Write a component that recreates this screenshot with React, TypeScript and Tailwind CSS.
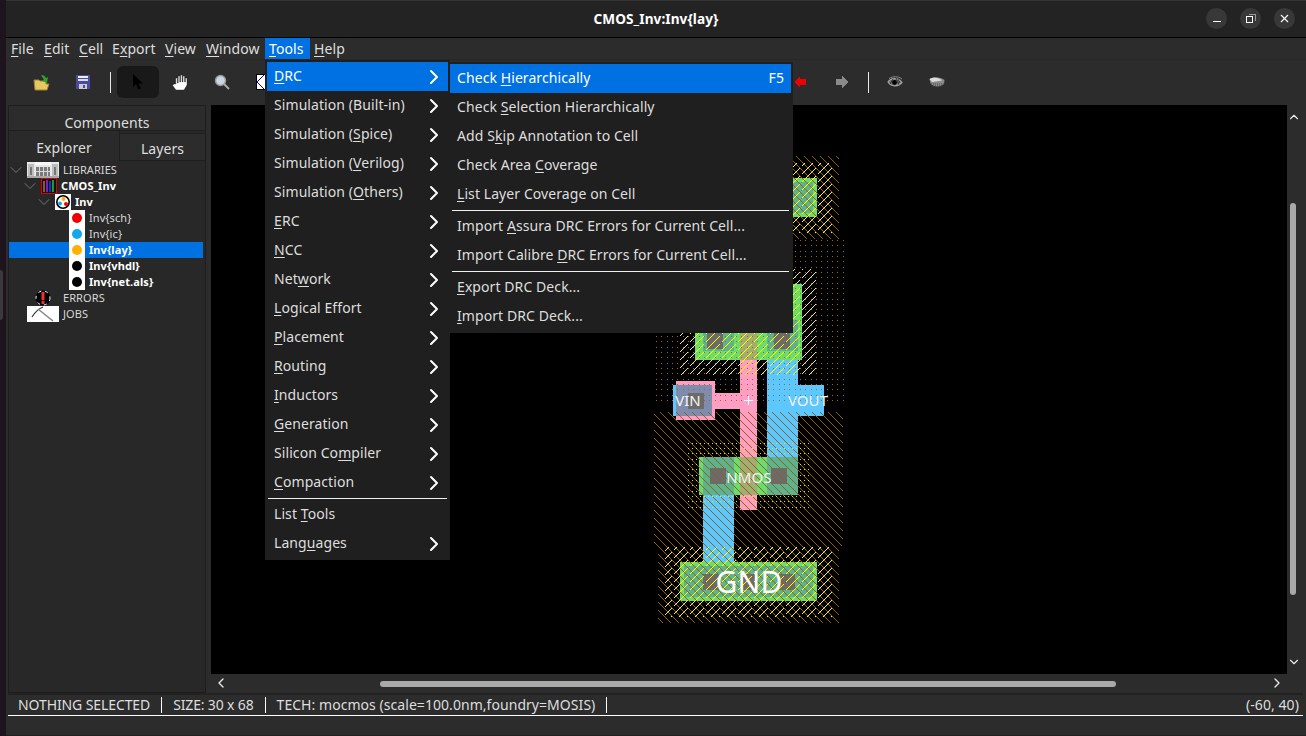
// Electric VLSI style window: layout editor with the Tools > DRC menu open
import { ChevronDown, ChevronLeft, ChevronRight, ChevronUp, X } from 'lucide-react';

const Mnemonic = ({ text }: { text: string }) => {
  const i = text.indexOf('&');
  if (i < 0) return <>{text}</>;
  return (
    <>
      {text.slice(0, i)}
      <u className="underline-offset-[2px]">{text[i + 1]}</u>
      {text.slice(i + 2)}
    </>
  );
};

const menuBar = [
  { label: '&File', w: 'w-[33px]' },
  { label: '&Edit', w: 'w-[35px]' },
  { label: '&Cell', w: 'w-[33px]' },
  { label: 'E&xport', w: 'w-[53px]' },
  { label: '&View', w: 'w-[41px]' },
  { label: '&Window', w: 'w-[63px]' },
];

const toolsItems = [
  { label: '&DRC', sub: true, active: true },
  { label: 'Simulation (Built-in)', sub: true },
  { label: 'Simulation (&Spice)', sub: true },
  { label: 'Simulation (&Verilog)', sub: true },
  { label: 'Simulation (&Others)', sub: true },
  { label: '&ERC', sub: true },
  { label: '&NCC', sub: true },
  { label: 'Net&work', sub: true },
  { label: '&Logical Effort', sub: true },
  { label: '&Placement', sub: true },
  { label: '&Routing', sub: true },
  { label: '&Inductors', sub: true },
  { label: '&Generation', sub: true },
  { label: 'Silicon Co&mpiler', sub: true },
  { label: '&Compaction', sub: true },
  { sep: true },
  { label: 'List &Tools' },
  { label: 'Lang&uages', sub: true },
];

const drcItems = [
  { label: 'Check &Hierarchically', key: 'F5', active: true },
  { label: 'Check &Selection Hierarchically' },
  { label: 'Add S&kip Annotation to Cell' },
  { label: 'Check Area &Coverage' },
  { label: '&List Layer Coverage on Cell' },
  { sep: true },
  { label: 'Import &Assura DRC Errors for Current Cell...' },
  { label: 'Import Calibre &DRC Errors for Current Cell...' },
  { sep: true },
  { label: '&Export DRC Deck...' },
  { label: '&Import DRC Deck...' },
];

const Building = () => (
  <svg width="32" height="16" viewBox="0 0 32 16" shapeRendering="crispEdges">
    <rect width="32" height="16" fill="#e8e8e8" />
    <rect x="1" y="2" width="6" height="14" fill="#bdbdbd" />
    <rect x="25" y="2" width="6" height="14" fill="#bdbdbd" />
    <rect x="8" y="0" width="16" height="3" fill="#f8f8f8" />
    <rect x="9" y="5" width="14" height="9" fill="#7a7a7a" />
    <rect x="12" y="5" width="1" height="9" fill="#d8d8d8" />
    <rect x="16" y="5" width="1" height="9" fill="#d8d8d8" />
    <rect x="20" y="5" width="1" height="9" fill="#d8d8d8" />
    <rect x="9" y="9" width="14" height="1" fill="#d8d8d8" />
    <rect x="3" y="5" width="2" height="8" fill="#777" />
    <rect x="27" y="5" width="2" height="8" fill="#777" />
    <rect y="14" width="32" height="2" fill="#a8a8a8" />
  </svg>
);

const Book = () => (
  <svg width="16" height="16" viewBox="0 0 16 16" shapeRendering="crispEdges">
    <rect width="16" height="16" fill="#e00000" />
    <rect x="1" y="1" width="14" height="14" fill="#111" />
    <rect x="2" y="3" width="2" height="11" fill="#8a5a20" />
    <rect x="5" y="2" width="2" height="12" fill="#7a20c0" />
    <rect x="8" y="3" width="2" height="11" fill="#1030d0" />
    <rect x="11" y="2" width="2" height="12" fill="#10a030" />
  </svg>
);

const CellIcon = () => (
  <svg width="16" height="16" viewBox="0 0 16 16">
    <rect width="16" height="16" fill="#fff" />
    <circle cx="8" cy="8" r="6.2" fill="#fff" stroke="#000" strokeWidth="1.6" />
    <circle cx="8.5" cy="5" r="2" fill="#ffb000" />
    <circle cx="5" cy="9.5" r="2" fill="#12a8ee" />
    <circle cx="11" cy="10" r="2" fill="#f00000" />
  </svg>
);

const Dot = ({ color }: { color: string }) => (
  <span className="flex w-4 h-4 shrink-0 items-center justify-center bg-white">
    <span className={`w-[10px] h-[10px] rounded-full ${color}`} />
  </span>
);

const ErrorIcon = () => (
  <svg width="16" height="16" viewBox="0 0 16 16">
    <circle cx="8" cy="8" r="7.5" fill="#000" />
    <circle cx="8" cy="8" r="7" fill="none" stroke="#fff" strokeWidth="1" strokeDasharray="3 4" />
    <rect x="6.5" y="2" width="3" height="8" fill="#f03030" />
    <rect x="6.5" y="11" width="3" height="3" fill="#f03030" />
  </svg>
);

const Pickaxe = () => (
  <svg width="32" height="16" viewBox="0 0 32 16">
    <rect width="32" height="16" fill="#fff" />
    <path d="M5 11 C8 6 11 3 16 1" stroke="#333" strokeWidth="1.2" fill="none" />
    <path d="M11 3 L26 15" stroke="#888" strokeWidth="1.6" />
  </svg>
);

const TreeChevron = () => <ChevronDown size={20} strokeWidth={0.8} className="shrink-0 -m-1 text-[#9a9a9a]" />;

const Tree = () => (
  <div className="mt-px text-[11px] leading-4 text-[#d8d8d8]">
    <div className="h-4 flex items-center pl-[2px]">
      <span className="flex w-[10px] justify-center mr-[6px]"><TreeChevron /></span>
      <Building />
      <span className="ml-1">LIBRARIES</span>
    </div>
    <div className="h-4 flex items-center pl-[16px] font-bold text-white">
      <span className="flex w-[10px] justify-center mr-[6px]"><TreeChevron /></span>
      <Book />
      <span className="ml-1">CMOS_Inv</span>
    </div>
    <div className="h-4 flex items-center pl-[30px] font-bold text-white">
      <span className="flex w-[10px] justify-center mr-[6px]"><TreeChevron /></span>
      <CellIcon />
      <span className="ml-1">Inv</span>
    </div>
    <div className="h-4 flex items-center pl-[60px]">
      <Dot color="bg-[#f00000]" />
      <span className="ml-1">Inv{'{sch}'}</span>
    </div>
    <div className="h-4 flex items-center pl-[60px]">
      <Dot color="bg-[#12a8ee]" />
      <span className="ml-1">Inv{'{ic}'}</span>
    </div>
    <div className="h-4 flex items-center pl-[60px] mr-[2px] bg-[#0071e3] font-bold text-white">
      <Dot color="bg-[#ffb000]" />
      <span className="ml-1">Inv{'{lay}'}</span>
    </div>
    <div className="h-4 flex items-center pl-[60px] font-bold text-white">
      <Dot color="bg-black" />
      <span className="ml-1">Inv{'{vhdl}'}</span>
    </div>
    <div className="h-4 flex items-center pl-[60px] font-bold text-white">
      <Dot color="bg-black" />
      <span className="ml-1">Inv{'{net.als}'}</span>
    </div>
    <div className="h-4 flex items-center pl-[26px]">
      <ErrorIcon />
      <span className="ml-3">ERRORS</span>
    </div>
    <div className="h-4 flex items-center pl-[18px]">
      <Pickaxe />
      <span className="ml-1">JOBS</span>
    </div>
  </div>
);

const ToolSlot = ({ children, className = '' }: { children: React.ReactNode; className?: string }) => (
  <div className={`w-[42px] h-8 shrink-0 flex items-center justify-center ${className}`}>{children}</div>
);

const ToolSep = () => <div className="w-px h-[21px] bg-[#e8e8e8] shrink-0" />;

const Toolbar = () => (
  <div className="h-[45px] shrink-0 flex items-center pl-[14px] pb-[1px]">
    <ToolSlot>
      <svg width="18" height="18" viewBox="0 0 18 18" className="ml-[2px]">
        <path d="M1 7 h5 l1 1 h6 v3 h3 l-2 6 H2 Z" fill="#e8c860" stroke="#a08030" strokeWidth="1" />
        <path d="M8 2 c3 0 4 1 5 3 l2 -1 -1 6 -5 -2 2 -1 c-1 -2 -2 -3 -3 -5Z" fill="#30a030" />
      </svg>
    </ToolSlot>
    <ToolSlot>
      <svg width="14" height="14" viewBox="0 0 14 14" shapeRendering="crispEdges">
        <rect width="14" height="14" fill="#4a4aa0" />
        <rect x="2" y="1" width="10" height="2" fill="#eee" />
        <rect x="2" y="4" width="10" height="2" fill="#ddd" />
        <rect x="3" y="9" width="8" height="5" fill="#ccc" />
        <rect x="7" y="10" width="2" height="3" fill="#4a4aa0" />
      </svg>
    </ToolSlot>
    <div className="w-[6px] shrink-0" />
    <ToolSep />
    <div className="w-[6px] shrink-0" />
    <ToolSlot className="rounded-md bg-[#191919]">
      <svg width="12" height="16" viewBox="0 0 12 16">
        <path d="M1 0 V13 L4 10 L6.5 15.5 L9 14.5 L6.5 9.5 H11 Z" fill="#000" />
      </svg>
    </ToolSlot>
    <ToolSlot>
      <svg width="16" height="17" viewBox="0 0 16 17">
        <path
          d="M2 10 L0.5 11.5 L4 16 H12 L15 11 V4 H13.4 V8 H12.6 V2 H11 V8 H10.2 V1 H8.6 V8 H7.8 V2 H6.2 V9 H5.4 V4 H3.8 V10 Z"
          fill="#fff"
          stroke="#222"
          strokeWidth="0.4"
        />
      </svg>
    </ToolSlot>
    <ToolSlot>
      <svg width="16" height="16" viewBox="0 0 16 16">
        <circle cx="6.5" cy="6.5" r="5" fill="#cfd4e4" stroke="#999" strokeWidth="1.4" />
        <path d="M10 10 L15 15" stroke="#aaa" strokeWidth="2" />
      </svg>
    </ToolSlot>
    <ToolSlot>
      <svg width="16" height="16" viewBox="0 0 16 16" shapeRendering="crispEdges">
        <rect width="16" height="16" fill="#000" />
        <rect x="1" y="1" width="14" height="14" fill="#fff" />
        <path d="M8 1 L1 8 L8 15" fill="none" stroke="#0000c0" strokeWidth="1" />
      </svg>
    </ToolSlot>
    <div className="w-[494px] shrink-0" />
    <ToolSlot>
      <svg width="12" height="12" viewBox="0 0 12 12" shapeRendering="crispEdges">
        <path d="M0 6 L6 0 V3 H12 V9 H6 V12 Z" fill="#f00000" />
      </svg>
    </ToolSlot>
    <ToolSlot>
      <svg width="12" height="12" viewBox="0 0 12 12" shapeRendering="crispEdges">
        <path d="M12 6 L6 0 V3 H0 V9 H6 V12 Z" fill="#8a8a8a" />
      </svg>
    </ToolSlot>
    <div className="w-[5px] shrink-0" />
    <ToolSep />
    <div className="w-[5px] shrink-0" />
    <ToolSlot>
      <svg width="16" height="12" viewBox="0 0 16 12">
        <path d="M1 6 C4 1.5 11 1.5 15 6.5 C11 11 4 11 1 6 Z" fill="#6a6a6a" stroke="#a8a8a8" strokeWidth="1.2" />
        <path d="M3 8 L6 3 M11 3 L13 7 M9 2 L12 9" stroke="#2c2c2c" strokeWidth="0.8" />
        <circle cx="7.5" cy="6.5" r="2.4" fill="#000" />
        <path d="M2 2.5 C6 0 11 0 15 3" fill="none" stroke="#8a8a8a" strokeWidth="1" />
      </svg>
    </ToolSlot>
    <ToolSlot>
      <svg width="16" height="12" viewBox="0 0 16 12">
        <path d="M0.5 3 C4 0.5 11 0.5 15.5 4 L15 8 C11 11.5 4 11 1.5 7.5 Z" fill="#8a8a8a" />
        <path d="M0.5 3 C4 1 10 1 13 4.5 L3 6 Z" fill="#dcdcdc" />
        <path d="M2 8 H15 M4 10 H13" stroke="#444" strokeWidth="1" strokeDasharray="1 1" />
      </svg>
    </ToolSlot>
  </div>
);

const yellowSteps = [0, 1, 2, 3, 4, 5, 6, 7, 8, 9, 10, 11, 12, 13];

// the chip itself: solid layers first, stipple and hatch go over them
const ChipLayout = () => (
  <svg width="1076" height="569" viewBox="211 105 1076 569" className="absolute inset-0" shapeRendering="crispEdges">
    <defs>
      <pattern id="brownHatch" width="8" height="8" patternUnits="userSpaceOnUse">
        {[0, 1, 2, 3, 4, 5, 6, 7].map((i) => (
          <rect key={i} x={i} y={i} width="1" height="1" fill="#8f601e" />
        ))}
      </pattern>
      <pattern id="yellowHatch" width="16" height="16" patternUnits="userSpaceOnUse">
        {yellowSteps.map((i) => {
          const y2 = (i + 8) % 16;
          return (
            <g key={i}>
              <rect x={15 - i} y={i} width="1" height="1" fill="#ffff00" />
              <rect x={(7 - y2 + 16) % 16} y={y2} width="1" height="1" fill="#ffff00" />
            </g>
          );
        })}
      </pattern>
      <pattern id="wellDots" width="16" height="16" patternUnits="userSpaceOnUse">
        {[0, 5, 11].map((x) =>
          [0, 5, 11].map((y) => <rect key={`${x}-${y}`} x={x} y={y} width="1" height="1" fill="#9a6a22" />),
        )}
      </pattern>
      <pattern id="yellowDots" width="16" height="16" patternUnits="userSpaceOnUse">
        {[0, 4, 8, 12].map((x) =>
          [0, 5, 11].map((y) => <rect key={`${x}-${y}`} x={x} y={y} width="1" height="1" fill="#e8e000" />),
        )}
      </pattern>
    </defs>

    {/* active */}
    <rect x="658" y="178" width="159" height="39" fill="#6cdc6c" />
    <rect x="695" y="284" width="107" height="76" fill="#6cdc6c" />
    <rect x="699" y="457" width="99" height="38" fill="#6cdc6c" />
    <rect x="680" y="562" width="137" height="39" fill="#6cdc6c" />

    {/* metal over active */}
    <rect x="703" y="320" width="31" height="31" fill="#5fb38c" />
    <rect x="767" y="320" width="31" height="31" fill="#5fb38c" />
    <rect x="703" y="457" width="31" height="38" fill="#5fb38c" />
    <rect x="767" y="457" width="31" height="38" fill="#5fb38c" />
    <rect x="684" y="566" width="129" height="31" fill="#5fb38c" />
    <rect x="662" y="182" width="151" height="31" fill="#5fb38c" />

    {/* metal */}
    <rect x="703" y="495" width="31" height="67" fill="#5cc8ff" />
    <rect x="767" y="360" width="31" height="97" fill="#5cc8ff" />
    <rect x="798" y="385" width="26" height="31" fill="#5cc8ff" />
    <rect x="673" y="385" width="39" height="31" fill="#5cc8ff" />

    {/* poly */}
    <rect x="740" y="360" width="17" height="97" fill="#ff9ec2" />
    <rect x="740" y="495" width="17" height="15" fill="#ff9ec2" />
    <rect x="715" y="393" width="25" height="16" fill="#ff9ec2" />
    <rect x="676" y="381" width="39" height="39" fill="#ff9ec2" />
    <rect x="676" y="385" width="36" height="31" fill="#7f8cae" />
    <rect x="740" y="284" width="17" height="76" fill="#a3ad70" />
    <rect x="740" y="457" width="17" height="38" fill="#a3ad70" />

    {/* contacts */}
    <rect x="707" y="333" width="16" height="16" fill="#6b6b6b" />
    <rect x="774" y="333" width="16" height="16" fill="#6b6b6b" />
    <rect x="688" y="393" width="16" height="16" fill="#6b6b6b" />
    <rect x="710" y="468" width="16" height="16" fill="#6b6b6b" />
    <rect x="771" y="468" width="16" height="16" fill="#6b6b6b" />
    <rect x="703" y="574" width="16" height="16" fill="#6b6b6b" />
    <rect x="741" y="574" width="16" height="16" fill="#6b6b6b" />
    <rect x="779" y="574" width="16" height="16" fill="#6b6b6b" />

    {/* wells and selects */}
    <rect x="653" y="239" width="193" height="165" fill="url(#wellDots)" />
    <rect x="654" y="412" width="189" height="134" fill="url(#brownHatch)" />
    <rect x="658" y="546" width="181" height="77" fill="url(#brownHatch)" />
    <rect x="658" y="156" width="181" height="83" fill="url(#brownHatch)" />
    <rect x="665" y="547" width="167" height="70" fill="url(#yellowHatch)" />
    <rect x="665" y="163" width="167" height="70" fill="url(#yellowHatch)" />
    <rect x="680" y="269" width="137" height="106" fill="url(#yellowHatch)" />
    <rect x="686" y="443" width="125" height="14" fill="url(#yellowDots)" />
    <rect x="686" y="495" width="125" height="15" fill="url(#yellowDots)" />
    <rect x="686" y="457" width="13" height="38" fill="url(#yellowDots)" />
    <rect x="798" y="457" width="13" height="38" fill="url(#yellowDots)" />

    {/* labels */}
    <g shapeRendering="auto" fill="#f4f4f4" textAnchor="middle" fontFamily="Noto Sans, sans-serif">
      <text x="688" y="406" fontSize="15">VIN</text>
      <text x="808" y="406" fontSize="15">VOUT</text>
      <text x="749" y="483" fontSize="15">NMOS</text>
      <text x="749" y="593" fill="#fff" fontSize="30">GND</text>
    </g>
    <path d="M748 396 V405 M743.5 400.5 H752.5" stroke="#fff" strokeWidth="1" />
  </svg>
);

const App = () => {
  return (
    <div className="relative w-[1306px] h-[736px] flex overflow-hidden bg-[#2c2c2c] text-[#dedede] text-[14px] tracking-[0.08px] font-['Noto_Sans','Liberation_Sans',sans-serif]">
      <div className="relative w-[6px] shrink-0 bg-[#1d141d]">
        <div className="absolute left-0 top-[270px] w-[3px] h-[50px] rounded-r-sm bg-[#3a3a3a]" />
      </div>

      <div className="flex-1 min-w-0 flex flex-col">
        {/* title bar */}
        <div className="relative h-[38px] shrink-0 flex items-center justify-center bg-[#232323] border-t border-[#333] border-b border-b-black">
          <span className="font-bold text-white text-[13.6px]">CMOS_Inv:Inv{'{lay}'}</span>
          <div className="absolute right-[11px] top-[7px] flex gap-[13px]">
            <button className="w-[21px] h-[21px] rounded-full bg-[#383838] flex items-center justify-center">
              <span className="block w-2 h-px bg-white mt-[6px]" />
            </button>
            <button className="w-[21px] h-[21px] rounded-full bg-[#383838] flex items-center justify-center">
              <svg width="10" height="10" viewBox="0 0 10 10" shapeRendering="crispEdges">
                <rect x="0.5" y="2.5" width="6" height="6" fill="none" stroke="#fff" />
                <path d="M3 0.5 H9.5 V7" fill="none" stroke="#999" />
              </svg>
            </button>
            <button className="w-[21px] h-[21px] rounded-full bg-[#383838] flex items-center justify-center">
              <X size={13} strokeWidth={2} className="text-white" />
            </button>
          </div>
        </div>

        {/* menu bar */}
        <div className="h-[22px] shrink-0 flex items-center pl-[1px] leading-[21px] bg-[#2c2c2c] border-b border-[#282828]">
          {menuBar.map((m) => (
            <span key={m.label} className={`${m.w} pl-[4px] shrink-0`}>
              <Mnemonic text={m.label} />
            </span>
          ))}
          <span className="w-[45px] shrink-0 h-[21px] pl-[4px] bg-[#0071e3] text-white">
            <Mnemonic text="&Tools" />
          </span>
          <span className="pl-[4px]">
            <Mnemonic text="&Help" />
          </span>
        </div>

        <Toolbar />

        {/* body */}
        <div className="flex-1 min-h-0 flex">
          <div className="w-[198px] shrink-0 ml-[2px] flex flex-col border border-[#1e1e1e] bg-[#282828]">
            <div className="h-[25px] shrink-0 flex items-end justify-center border-b border-[#1e1e1e] bg-[#2c2c2c] leading-[15px]">
              Components
            </div>
            <div className="h-[30px] shrink-0 flex">
              <div className="w-[111px] flex items-center justify-center bg-[#2a2a2a] border-r border-[#1e1e1e] pt-[3px]">
                Explorer
              </div>
              <div className="flex-1 flex items-center justify-center mt-[2px] pt-[3px] border-t border-b border-[#1e1e1e] bg-[#2c2c2c]">
                Layers
              </div>
            </div>
            <Tree />
          </div>
          <div className="w-[5px] shrink-0" />
          <div className="flex-1 min-w-0 flex flex-col">
            <div className="h-[569px] shrink-0 flex">
              <div className="relative w-[1076px] h-[569px] shrink-0 bg-black overflow-hidden">
                <ChipLayout />
              </div>
              <div className="flex-1 flex flex-col items-center justify-between py-[5px] pr-[6px] relative">
                <ChevronUp size={14} strokeWidth={2} className="text-[#e8e8e8]" />
                <div className="absolute left-[3px] top-[98px] w-[6px] h-[392px] rounded-full bg-[#a9a9a9]" />
                <ChevronDown size={14} strokeWidth={2} className="text-[#e8e8e8]" />
              </div>
            </div>
            <div className="relative h-[18px] shrink-0 flex items-center justify-between w-[1076px] px-[2px]">
              <ChevronLeft size={16} strokeWidth={2} className="text-[#e8e8e8]" />
              <div className="absolute left-[169px] top-[7px] w-[736px] h-[6px] rounded-full bg-[#a9a9a9]" />
              <ChevronRight size={16} strokeWidth={2} className="text-[#e8e8e8]" />
            </div>
          </div>
        </div>

        {/* status bar */}
        <div className="h-[23px] shrink-0 mr-[3px] ml-[2px] flex items-center border-t-2 border-t-[#222] border-b border-b-white">
          <span className="pl-[10px] pr-[11px] border-r border-white leading-[16px] tracking-[-0.1px]">NOTHING SELECTED</span>
          <span className="px-[11px] border-r border-white leading-[16px] tracking-[-0.15px]">SIZE: 30 x 68</span>
          <span className="px-[11px] border-r border-white leading-[16px] tracking-[0.05px]">TECH: mocmos (scale=100.0nm,foundry=MOSIS)</span>
          <span className="ml-auto pr-[4px] leading-[16px]">(-60, 40)</span>
        </div>
        <div className="h-[20px] shrink-0 border-b border-[#222]" />
      </div>

      {/* Tools menu */}
      <div className="absolute left-[265px] top-[60px] w-[185px] h-[500px] p-[2px] bg-[#1f1f1f] z-10">
        {toolsItems.map((item, i) =>
          item.sep ? (
            <div key={i} className="h-[3px] mx-[1px] flex items-center">
              <div className="w-full h-px bg-[#f0f0f0]" />
            </div>
          ) : (
            <div
              key={i}
              className={`h-[29px] flex items-center justify-between pl-[7px] pr-[2px] ${item.active ? 'bg-[#0071e3] text-white' : ''}`}
            >
              <span className="pb-[2px]">
                <Mnemonic text={item.label as string} />
              </span>
              {item.sub && <ChevronRight size={24} strokeWidth={2} className="text-white" />}
            </div>
          ),
        )}
      </div>

      {/* DRC submenu */}
      <div className="absolute left-[450px] top-[62px] w-[343px] h-[271px] pt-[2px] pr-[2px] bg-[#1f1f1f] z-20">
        {drcItems.map((item, i) =>
          item.sep ? (
            <div key={i} className="h-[3px] mx-[2px] flex items-center">
              <div className="w-full h-px bg-[#f0f0f0]" />
            </div>
          ) : (
            <div
              key={i}
              className={`h-[29px] flex items-center justify-between pl-[7px] pr-[7px] ${item.active ? 'bg-[#0071e3] text-white' : ''}`}
            >
              <span className="pb-[2px]">
                <Mnemonic text={item.label as string} />
              </span>
              {item.key && <span className="pb-[2px]">{item.key}</span>}
            </div>
          ),
        )}
      </div>
    </div>
  );
};

export default App;
